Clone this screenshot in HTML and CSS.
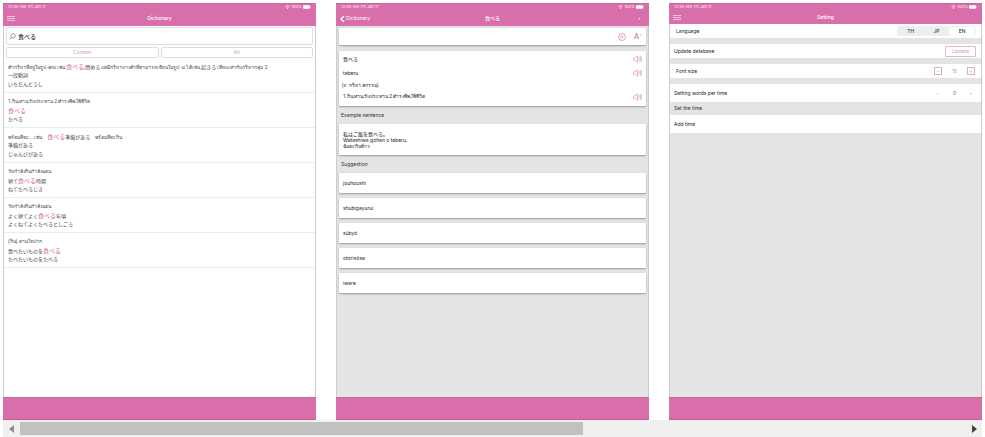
FILE: index.html
```html
<!DOCTYPE html>
<html lang="ja">
<head>
<meta charset="utf-8">
<title>Dictionary</title>
<link rel="stylesheet" href="styles.css">
</head>
<body>
<svg class="defs" aria-hidden="true">
  <symbol id="wifi" viewBox="0 0 12 10"><path d="M1 4a7 7 0 0 1 10 0M3 6a4 4 0 0 1 6 0" fill="none" stroke="currentColor" stroke-width="1.6"/><circle cx="6" cy="8" r="1.4" fill="currentColor"/></symbol>
  <symbol id="battery" viewBox="0 0 16 8"><rect x="0" y="0.5" width="14" height="7" rx="2" fill="currentColor"/><path d="M15 3v2" stroke="currentColor"/></symbol>
  <symbol id="sound" viewBox="0 0 18 16"><path d="M1 5.500h3l5-4v13l-5-4H1zM11.500 5q2 3 0 6M13.500 3q3.500 5 0 10M15.500 1.500q4 6.500 0 13" fill="none" stroke="currentColor" stroke-width="1.200"/></symbol>
</svg>
<main class="gallery">
  <section class="screen">
    <header class="bar">
      <div class="status"><span>12:46 AM&nbsp; Fri Jan 17</span><span class="signal"><svg class="wifi"><use href="#wifi"/></svg>100%<svg class="battery"><use href="#battery"/></svg></span></div>
      <div class="nav">
        <button class="icon-button" aria-label="Menu"><svg class="menu" viewBox="0 0 8 5"><path d="M0 .5h8M0 2.500h8M0 4.500h8" stroke="currentColor" stroke-width="1"/></svg></button>
        <h1>Dictionary</h1><span></span>
      </div>
    </header>
    <div class="content">
      <label class="search"><svg class="lens" viewBox="0 0 16 16"><circle cx="9.500" cy="6.500" r="5" fill="none" stroke="currentColor" stroke-width="1.300"/><path d="M6 10l-4.500 4.500" stroke="currentColor" stroke-width="1.600"/></svg><input type="text" value="食べる" aria-label="Search"></label>
      <div class="filters"><button>Context</button><button>All</button></div>
      <ul class="results">
        <li><p>คำกริยาที่อยู่ในรูป -eru เช่น <mark>食べる</mark>,閉める แต่มีกริยาบางคำที่สามารถเขียนในรูป -u ได้เช่น 起きる เทียบเท่ากับกริยากลุ่ม 2</p><p>一段動詞</p><p>いちだんどうし</p></li>
        <li><p>1.กิน,ทาน,รับประทาน 2.ดำรงชีพ,ใช้ชีวิต</p><p><mark>食べる</mark></p><p>たべる</p></li>
        <li><p>พร้อมที่จะ....เช่น　<mark>食べる</mark>準備がある　พร้อมที่จะกิน</p><p>準備がある</p><p>じゅんびがある</p></li>
        <li><p>วัยกำลังกินกำลังนอน</p><p>寝て<mark>食べる</mark>時期</p><p>ねてたべるじき</p></li>
        <li><p>วัยกำลังกินกำลังนอน</p><p>よく寝てよく<mark>食べる</mark>年頃</p><p>よくねてよくたべるとしごろ</p></li>
        <li><p>(กิน) ตามใจปาก</p><p>食べたいものを<mark>食べる</mark></p><p>たべたいものをたべる</p></li>
      </ul>
    </div>
    <footer></footer>
  </section>

  <section class="screen gray">
    <header class="bar">
      <div class="status"><span>12:46 AM&nbsp; Fri Jan 17</span><span class="signal"><svg class="wifi"><use href="#wifi"/></svg>100%<svg class="battery"><use href="#battery"/></svg></span></div>
      <div class="nav">
        <a class="back" href="#"><svg class="chevron" viewBox="0 0 5 8"><path d="M4 1L1 4l3 3" fill="none" stroke="currentColor" stroke-width="1.300"/></svg>Dictionary</a>
        <h1>食べる</h1><button class="icon-button end" aria-label="Add">+</button>
      </div>
    </header>
    <div class="content cards">
      <div class="card tools">
        <button aria-label="Play"><svg class="tool" viewBox="0 0 16 16"><circle cx="8" cy="8" r="7" fill="none" stroke="currentColor" stroke-width="1.500"/><path d="M6 5v6l5-3z" fill="none" stroke="currentColor" stroke-width="1.200"/></svg></button>
        <button class="size" aria-label="Text size">A<sup>+</sup></button>
      </div>
      <div class="card word">
        <div class="line"><span>食べる</span><button aria-label="Listen"><svg class="sound"><use href="#sound"/></svg></button></div>
        <div class="line"><span>taberu</span><button aria-label="Listen"><svg class="sound"><use href="#sound"/></svg></button></div>
        <p class="kind">(v&nbsp; กริยา สกรรม)</p>
        <div class="line last"><span class="meaning">1.กิน,ทาน,รับประทาน 2.ดำรงชีพ,ใช้ชีวิต</span><button aria-label="Listen"><svg class="sound"><use href="#sound"/></svg></button></div>
      </div>
      <h2>Example sentence</h2>
      <div class="card example"><p>私はご飯を食べる。</p><p>Watashiwa gohan o taberu.</p><p>ฉันจะกินข้าว</p></div>
      <h2>Suggestion</h2>
      <ul class="suggestions">
        <li class="card">jouhoushi</li><li class="card">shubigayurui</li><li class="card">sūbyō</li><li class="card">otorisōsa</li><li class="card">iware</li>
      </ul>
    </div>
    <footer></footer>
  </section>

  <section class="screen gray">
    <header class="bar compact">
      <div class="status"><span>12:46 AM&nbsp; Fri Jan 17</span><span class="signal"><svg class="wifi"><use href="#wifi"/></svg>100%<svg class="battery"><use href="#battery"/></svg></span></div>
      <div class="nav">
        <button class="icon-button" aria-label="Menu"><svg class="menu" viewBox="0 0 8 5"><path d="M0 .5h8M0 2.500h8M0 4.500h8" stroke="currentColor" stroke-width="1"/></svg></button>
        <h1>Setting</h1><span></span>
      </div>
    </header>
    <div class="content settings">
      <div class="row inset"><span>Language</span><div class="segments"><button>TH</button><button>JP</button><button class="active">EN</button></div></div>
      <div class="row"><span>Update database</span><button class="update">Update</button></div>
      <div class="row inset"><span>Font size</span><div class="stepper boxed"><button aria-label="Smaller">−</button><output>15</output><button aria-label="Larger">+</button></div></div>
      <div class="row tall"><span>Setting words per time</span><div class="stepper"><button aria-label="Fewer">−</button><output class="dark">0</output><button aria-label="More">+</button></div></div>
      <h2>Set the time</h2>
      <div class="row tall">Add time</div>
    </div>
    <footer></footer>
  </section>
</main>
<div class="scrollbar">
  <button aria-label="Scroll left"><svg viewBox="0 0 5 8"><path d="M5 0v8L0 4z" fill="#8c8c8c"/></svg></button>
  <div class="track"><div class="thumb"></div></div>
  <button aria-label="Scroll right"><svg viewBox="0 0 5 8"><path d="M0 0v8l5-4z" fill="#404040"/></svg></button>
</div>
</body>
</html>
```
FILE: styles.css
```css
* { box-sizing: border-box; margin: 0; padding: 0; }
body {
  display: flex; flex-direction: column; height: 100vh; padding: 3px 3px 0;
  background: #fff; color: #333; overflow: hidden;
  font: 5px/9px Inter, "Noto Sans CJK JP", "Noto Sans", sans-serif;
}
button, input { font: inherit; color: inherit; border: 0; background: none; }
button { display: flex; align-items: center; justify-content: center; }
ul { list-style: none; }
a { color: inherit; text-decoration: none; }
svg { display: block; }
.defs { position: absolute; width: 0; height: 0; }

.gallery { flex: 1; display: grid; grid-template-columns: repeat(3, 1fr); gap: 20px; min-height: 0; }
.screen { display: flex; flex-direction: column; min-width: 0; background: #fff; border: 1px solid #ccc; border-width: 0 1px; }
.gray { background: #e4e4e4; }
.content { flex: 1; }
footer { height: 23px; margin: 0 -1px; background: #d86fab; border-top: 1px solid #c9699b; border-bottom: 1px solid #c35f90; }

.bar { height: 23px; margin: 0 -1px; padding: 0 4px; background: #d86fab; color: #fff; border-top: 1px solid #c9699b; }
.compact { height: 21px; }
.status { display: flex; justify-content: space-between; padding: 0 1px; font-size: 4px; line-height: 6px; color: #fdeef6; }
.signal { display: flex; align-items: center; gap: 1px; }
.wifi { width: 5px; height: 4px; color: #fff; }
.battery { width: 8px; height: 4px; color: #fff; }
.nav { display: grid; grid-template-columns: 1fr auto 1fr; align-items: center; height: 17px; }
.compact .nav { height: 15px; }
.nav h1 { font-size: 5px; font-weight: 500; }
.icon-button { justify-self: start; }
.end { justify-self: end; padding-right: 4px; }
.menu { width: 8px; height: 5px; color: #f1c6de; }
.back { display: flex; align-items: center; gap: 1px; }
.chevron { width: 5px; height: 8px; }

.search { display: flex; align-items: center; gap: 2px; height: 18px; margin: 1px 2px 2px; padding-left: 2px; border: 1px solid #e2dfe1; border-radius: 2px; }
.lens { width: 7px; height: 7px; color: #555; }
.search input { flex: 1; min-width: 0; font-size: 6px; font-weight: 500; outline: 0; }
.filters { display: grid; grid-template-columns: 1fr 1fr; gap: 2px; margin: 0 2px; color: #d4a0b6; }
.filters button { height: 11px; border: 1px solid #ddd; border-radius: 2px; }
.results, .meaning, .kind { font-family: Roboto, "Noto Sans CJK JP", "Noto Sans", sans-serif; }
.results li { height: 35px; padding: 4px 4px 0; border-bottom: 1px solid #eceeee; white-space: nowrap; color: #444; }
.results p { height: 9px; }
mark { background: none; color: #d7638f; font-size: 6px; }

.cards { padding: 2px; }
.card { background: #fff; border-radius: 1px; box-shadow: 0 1px 2px #999; color: #222; }
.tools { display: flex; justify-content: flex-end; align-items: center; gap: 8px; height: 17px; padding: 0 4px; color: #d58bad; }
.tool { width: 8px; height: 8px; }
.size { font-size: 8px; font-weight: 500; }
.size sup { font-size: 4px; align-self: flex-start; line-height: 6px; }
.word { margin-top: 6px; padding: 1px 4px 4px; }
.line { display: flex; align-items: center; justify-content: space-between; height: 14px; }
.sound { width: 9px; height: 8px; color: #d58bad; }
.kind { height: 11px; line-height: 11px; margin-left: -1px; }
.last { height: 11px; }
.screen h2 { font-size: 5px; font-weight: 400; color: #333; height: 18px; line-height: 18px; padding-left: 2px; }
.example { height: 31px; padding: 7px 4px; line-height: 6px; }
.suggestions { display: grid; gap: 5px; }
.suggestions .card { height: 20px; line-height: 20px; padding-left: 4px; }

.row { display: flex; align-items: center; justify-content: space-between; height: 14px; margin-bottom: 6px; padding: 0 5px 0 4px; background: #fff; color: #222; }
.inset { padding-left: 6px; }
.settings .tall { height: 18px; margin: 0; }
.settings h2 { height: 13px; line-height: 13px; padding-left: 4px; }
.segments { display: grid; grid-template-columns: repeat(3, 1fr); width: 79px; height: 10px; padding: 1px; border-radius: 3px; background: #eee; }
.segments .active { background: #fff; border-radius: 3px; }
.update { width: 31px; height: 11px; border: 1px solid #ddb9c9; border-radius: 1px; color: #d9a0ba; }
.stepper { display: grid; grid-template-columns: 8px 1fr 8px; align-items: center; width: 41px; text-align: center; color: #b99; margin-right: 1px; }
.stepper button { height: 8px; }
.boxed button { border: 1px solid #d4b3c1; }
.dark { color: #666; }

.scrollbar { display: grid; grid-template-columns: 17px 1fr 15px; height: 17px; background: #f0f0f0; align-items: center; }
.scrollbar svg { width: 5px; height: 8px; }
.thumb { width: 59.4%; height: 13px; background: #c1c1c1; }
```
